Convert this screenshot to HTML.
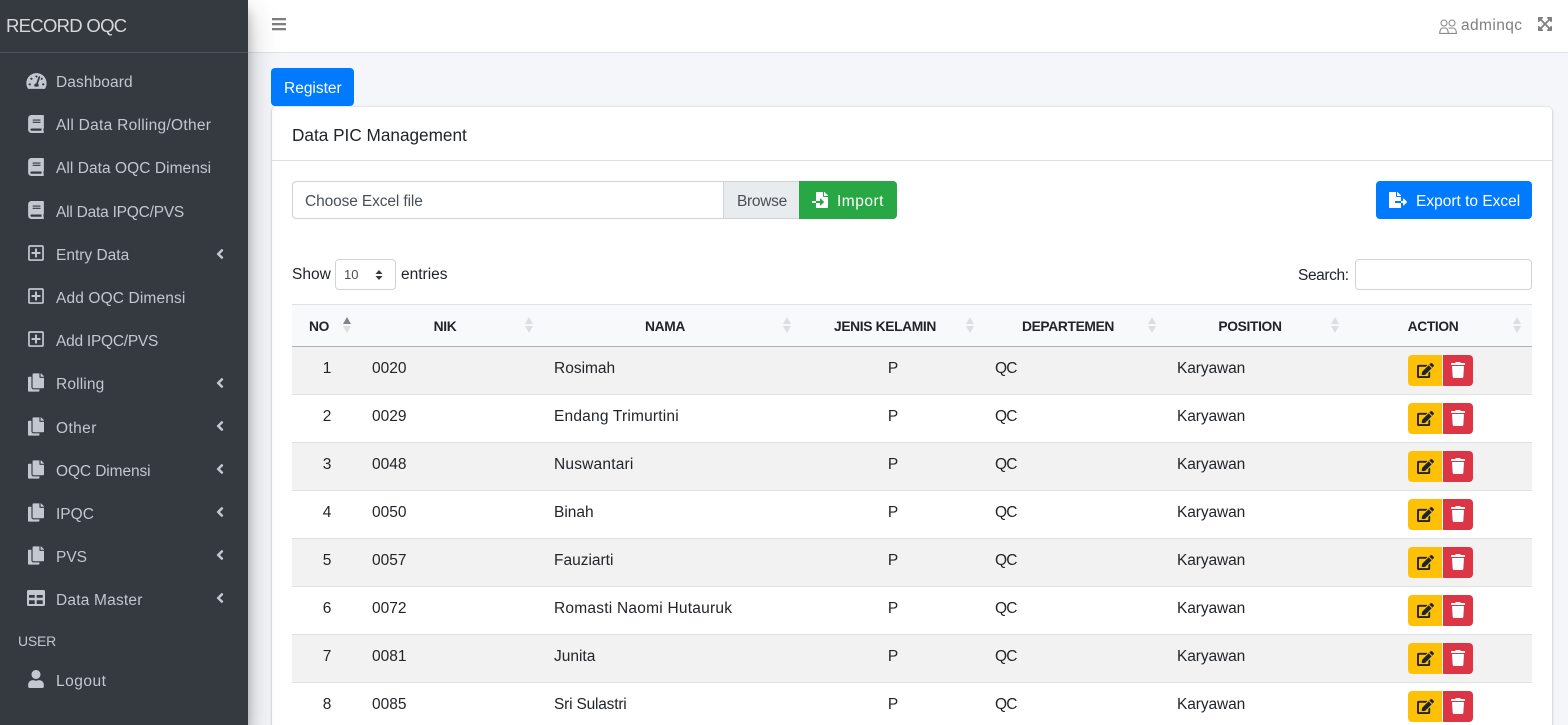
<!DOCTYPE html>
<html><head><meta charset="utf-8"><title>Data PIC Management</title>
<style>
html,body{margin:0;padding:0;width:1568px;height:725px;overflow:hidden;background:#f4f6f9;font-family:"Liberation Sans",sans-serif;font-size:15.5px;color:#212529}
div,svg,span{position:absolute;box-sizing:border-box}
#w{left:0;top:0;width:1568px;height:725px;overflow:hidden;background:#f4f6f9}
.t{line-height:20px;height:20px;white-space:nowrap;margin-top:1px}
.c{transform:translateX(-50%)}
#side{left:0;top:0;width:248px;height:725px;background:#343a40;box-shadow:0 14px 28px rgba(0,0,0,.25),0 10px 10px rgba(0,0,0,.22);z-index:5}
#side .t{left:56px;color:#c2c7d0;margin-top:4px}
#side svg{fill:#c2c7d0}
.ar{left:216px;width:8px;height:16px}
.th{font-weight:bold;font-size:13.8px;letter-spacing:-.35px;color:#212529;top:316px}
.up,.dn{width:0;height:0;border-left:4.5px solid transparent;border-right:4.5px solid transparent}
.up{top:317px;border-bottom:7px solid #dcdfe2}
.dn{top:326px;border-top:7px solid #dcdfe2}
.r{left:292px;width:1240px;height:48px;border-bottom:1px solid #dee2e6}
.e{left:1408px;width:34px;height:31px;background:#ffc107;border-radius:4px 0 0 4px}
.d{left:1443px;width:30px;height:31px;background:#dc3545;border-radius:0 4px 4px 0}
.e svg{left:9px;top:8px;width:17px;height:15px;fill:#1f2326}
.d svg{left:8px;top:7px;width:14px;height:16px;fill:#fff}
</style></head><body>
<svg width="0" height="0" style="position:absolute"><defs>
<symbol id="book" viewBox="0 0 448 512"><path d="M448 360V24c0-13.3-10.7-24-24-24H96C43 0 0 43 0 96v320c0 53 43 96 96 96h328c13.3 0 24-10.7 24-24v-16c0-7.5-3.5-14.3-8.9-18.7-4.2-15.4-4.2-59.3 0-74.7 5.4-4.3 8.9-11.1 8.9-18.6zM128 134c0-3.3 2.7-6 6-6h212c3.3 0 6 2.7 6 6v20c0 3.3-2.7 6-6 6H134c-3.3 0-6-2.7-6-6v-20zm0 64c0-3.3 2.7-6 6-6h212c3.3 0 6 2.7 6 6v20c0 3.3-2.7 6-6 6H134c-3.3 0-6-2.7-6-6v-20zm253.4 250H96c-17.7 0-32-14.3-32-32 0-17.6 14.4-32 32-32h285.4c-1.9 17.1-1.9 46.9 0 64z"/></symbol>
<symbol id="copy" viewBox="0 0 448 512"><path d="M320 448v40c0 13.255-10.745 24-24 24H24c-13.255 0-24-10.745-24-24V120c0-13.255 10.745-24 24-24h72v296c0 30.879 25.121 56 56 56h168zm0-344V0H152c-13.255 0-24 10.745-24 24v368c0 13.255 10.745 24 24 24h272c13.255 0 24-10.745 24-24V128H344c-13.2 0-24-10.8-24-24zm120.971-31.029L375.029 7.029A24 24 0 0 0 358.059 0H352v96h96v-6.059a24 24 0 0 0-7.029-16.97z"/></symbol>
<symbol id="plus" viewBox="0 0 448 512"><path d="M352 240v32c0 6.6-5.4 12-12 12h-88v88c0 6.6-5.4 12-12 12h-32c-6.6 0-12-5.4-12-12v-88h-88c-6.6 0-12-5.4-12-12v-32c0-6.6 5.4-12 12-12h88v-88c0-6.6 5.4-12 12-12h32c6.6 0 12 5.4 12 12v88h88c6.6 0 12 5.4 12 12zm96-160v352c0 26.5-21.5 48-48 48H48c-26.5 0-48-21.5-48-48V80c0-26.5 21.5-48 48-48h352c26.5 0 48 21.5 48 48zm-48 346V86c0-3.3-2.7-6-6-6H54c-3.3 0-6 2.7-6 6v340c0 3.3 2.7 6 6 6h340c3.3 0 6-2.7 6-6z"/></symbol>
<symbol id="ang" viewBox="0 0 256 512"><path d="M31.7 239l136-136c9.4-9.4 24.6-9.4 33.9 0l22.6 22.6c9.4 9.4 9.4 24.6 0 33.9L127.9 256l96.4 96.4c9.4 9.4 9.4 24.6 0 33.9L201.7 409c-9.4 9.4-24.6 9.4-33.9 0l-136-136c-9.5-9.4-9.5-24.6-.1-34z"/></symbol>
<symbol id="edit" viewBox="0 0 576 512"><path d="M402.6 83.2l90.2 90.2c3.8 3.8 3.8 10 0 13.8L274.4 405.6l-92.8 10.3c-12.4 1.4-22.9-9.1-21.5-21.5l10.3-92.8L388.8 83.2c3.8-3.8 10-3.8 13.8 0zm162-22.9l-48.8-48.8c-15.2-15.2-39.9-15.2-55.2 0l-35.4 35.4c-3.8 3.8-3.8 10 0 13.8l90.2 90.2c3.8 3.8 10 3.8 13.8 0l35.4-35.4c15.2-15.3 15.2-40 0-55.2zM384 346.2V448H64V128h229.8c3.2 0 6.2-1.3 8.5-3.5l40-40c7.6-7.6 2.2-20.5-8.5-20.5H48C21.5 64 0 85.5 0 112v352c0 26.5 21.5 48 48 48h352c26.5 0 48-21.5 48-48V306.2c0-10.7-12.9-16-20.5-8.5l-40 40c-2.2 2.3-3.5 5.3-3.5 8.5z"/></symbol>
<symbol id="trash" viewBox="0 0 448 512"><path d="M432 32H312l-9.4-18.7A24 24 0 0 0 281.1 0H166.8a23.72 23.72 0 0 0-21.4 13.3L136 32H16A16 16 0 0 0 0 48v32a16 16 0 0 0 16 16h416a16 16 0 0 0 16-16V48a16 16 0 0 0-16-16zM53.2 467a48 48 0 0 0 47.9 45h245.8a48 48 0 0 0 47.9-45L416 128H32z"/></symbol>
</defs></svg>
<div id="w">
<div id="side">
<div class="t" style="left:6px;top:15px;font-size:18.5px;letter-spacing:-.7px;color:rgba(255,255,255,.8);margin-top:1px">RECORD OQC</div>
<div style="left:0;top:52px;width:248px;height:1px;background:#4b545c"></div>

<svg style="left:26px;top:72px;width:21px;height:18px" viewBox="0 0 576 512"><path d="M288 32C128.94 32 0 160.94 0 320c0 52.8 14.25 102.26 39.06 144.8 5.61 9.62 16.3 15.2 27.44 15.2h443c11.14 0 21.83-5.58 27.44-15.2C561.75 422.26 576 372.8 576 320c0-159.06-128.94-288-288-288zm0 64c14.71 0 26.58 10.13 30.32 23.65-1.11 2.26-2.64 4.23-3.45 6.67l-9.22 27.67c-5.13 3.49-10.97 6.01-17.64 6.01-17.67 0-32-14.33-32-32S270.33 96 288 96zM96 384c-17.67 0-32-14.33-32-32s14.33-32 32-32 32 14.33 32 32-14.33 32-32 32zm48-160c-17.67 0-32-14.33-32-32s14.33-32 32-32 32 14.33 32 32-14.33 32-32 32zm246.77-72.41l-61.33 184C343.13 347.33 352 364.54 352 384c0 11.72-3.38 22.55-8.88 32H232.88c-5.5-9.45-8.88-20.28-8.88-32 0-33.94 26.5-61.43 59.9-63.59l61.34-184.01c4.17-12.56 17.73-19.45 30.36-15.17 12.57 4.19 19.35 17.79 15.17 30.36zm14.66 57.2l15.52-46.55c3.47-1.29 7.13-2.23 11.05-2.23 17.67 0 32 14.33 32 32s-14.33 32-32 32c-11.38-.01-20.89-6.28-26.57-15.22zM480 384c-17.67 0-32-14.33-32-32s14.33-32 32-32 32 14.33 32 32-14.33 32-32 32z"/></svg>
<div class="t" style="top:69px;letter-spacing:.1px">Dashboard</div>

<svg style="left:28px;top:115px;width:16px;height:18px"><use href="#book"/></svg>
<div class="t" style="top:112px;letter-spacing:.28px">All Data Rolling/Other</div>
<svg style="left:28px;top:158px;width:16px;height:18px"><use href="#book"/></svg>
<div class="t" style="top:155px;letter-spacing:.05px">All Data OQC Dimensi</div>
<svg style="left:28px;top:201px;width:16px;height:18px"><use href="#book"/></svg>
<div class="t" style="top:199px;letter-spacing:-.22px">All Data IPQC/PVS</div>

<svg style="left:28px;top:244px;width:16px;height:18px"><use href="#plus"/></svg>
<div class="t" style="top:242px">Entry Data</div>
<svg class="ar" style="top:246px"><use href="#ang"/></svg>
<svg style="left:28px;top:287px;width:16px;height:18px"><use href="#plus"/></svg>
<div class="t" style="top:285px;letter-spacing:.13px">Add OQC Dimensi</div>
<svg style="left:28px;top:330px;width:16px;height:18px"><use href="#plus"/></svg>
<div class="t" style="top:328px;letter-spacing:-.25px">Add IPQC/PVS</div>

<svg style="left:28px;top:373px;width:16px;height:19px"><use href="#copy"/></svg>
<div class="t" style="top:371px;letter-spacing:.15px">Rolling</div>
<svg class="ar" style="top:375px"><use href="#ang"/></svg>
<svg style="left:28px;top:417px;width:16px;height:19px"><use href="#copy"/></svg>
<div class="t" style="top:415px;letter-spacing:.4px">Other</div>
<svg class="ar" style="top:418px"><use href="#ang"/></svg>
<svg style="left:28px;top:460px;width:16px;height:19px"><use href="#copy"/></svg>
<div class="t" style="top:458px;letter-spacing:-.1px">OQC Dimensi</div>
<svg class="ar" style="top:461px"><use href="#ang"/></svg>
<svg style="left:28px;top:503px;width:16px;height:19px"><use href="#copy"/></svg>
<div class="t" style="top:501px">IPQC</div>
<svg class="ar" style="top:504px"><use href="#ang"/></svg>
<svg style="left:28px;top:546px;width:16px;height:19px"><use href="#copy"/></svg>
<div class="t" style="top:544px">PVS</div>
<svg class="ar" style="top:547px"><use href="#ang"/></svg>

<svg style="left:27px;top:590px;width:18px;height:16px" viewBox="0 0 18 16"><path fill-rule="evenodd" d="M1.500 0h15A1.500 1.500 0 0 1 18 1.500v13a1.500 1.500 0 0 1-1.500 1.500h-15A1.500 1.500 0 0 1 0 14.500v-13A1.500 1.500 0 0 1 1.500 0zM2 5v2.700h5.700V5zm7.700 0v2.700h6V5zM2 10.300V14h5.700v-3.700zm7.700 0V14h6v-3.700z"/></svg>
<div class="t" style="top:587px;letter-spacing:.2px">Data Master</div>
<svg class="ar" style="top:590px"><use href="#ang"/></svg>

<div class="t" style="left:18px;top:631px;font-size:14px;margin-top:0;letter-spacing:-.2px">USER</div>
<svg style="left:28px;top:670px;width:16px;height:18px" viewBox="0 0 448 512"><path d="M224 256c70.700 0 128-57.300 128-128S294.700 0 224 0 96 57.300 96 128s57.300 128 128 128zm89.600 32h-16.700c-22.200 10.200-46.900 16-72.900 16s-50.600-5.800-72.900-16h-16.700C60.200 288 0 348.200 0 422.400V464c0 26.500 21.500 48 48 48h352c26.500 0 48-21.500 48-48v-41.600c0-74.200-60.200-134.400-134.400-134.400z"/></svg>
<div class="t" style="top:668px;letter-spacing:.5px">Logout</div>
</div>

<div style="left:248px;top:0;width:1320px;height:53px;background:#fff;border-bottom:1px solid #dee2e6"></div>
<svg style="left:272px;top:18px;width:14px;height:13px" viewBox="0 0 14 13" fill="#7f7f7f"><rect width="14" height="2.300" y="0"/><rect width="14" height="2.300" y="5"/><rect width="14" height="2.300" y="10"/></svg>
<svg style="left:1439px;top:19px;width:18px;height:15px" viewBox="0 0 18 15" fill="none" stroke="#8a8a8a" stroke-width="1.100"><circle cx="5" cy="4" r="3"/><circle cx="13" cy="4" r="3"/><path d="M.7 14.400c0-3.500 1.500-5.400 3-5.400h2.600c1.500 0 3 1.900 3 5.400zM9.500 9.200c.6-.2 1-.2 1.800-.2h2.700c2 0 3.400 2 3.400 5.400H9.300"/></svg>
<div class="t" style="left:1461px;top:15px;color:#7f7f7f;letter-spacing:.4px">adminqc</div>
<svg style="left:1538px;top:16px;width:14px;height:16px;fill:#7f7f7f" viewBox="0 0 448 512"><path d="M448 344v112a23.940 23.940 0 0 1-24 24H312c-21.390 0-32.090-25.900-17-41l36.200-36.200L224 295.600 116.770 402.900 153 439c15.090 15.100 4.390 41-17 41H24a23.940 23.940 0 0 1-24-24V344c0-21.400 25.890-32.100 41-17l36.190 36.200L184.460 256 77.180 148.700 41 185c-15.100 15.100-41 4.400-41-17V56a23.940 23.940 0 0 1 24-24h112c21.390 0 32.090 25.900 17 41l-36.200 36.200L224 216.400l107.230-107.300L295 73c-15.090-15.100-4.390-41 17-41h112a23.940 23.940 0 0 1 24 24v112c0 21.400-25.890 32.100-41 17l-36.190-36.200L263.540 256l107.280 107.300L407 327.100c15.100-15.200 41-4.500 41 16.900z"/></svg>

<div style="left:271px;top:68px;width:83px;height:38px;background:#007bff;border-radius:4px"></div>
<div class="t" style="left:284px;top:78px;color:#fff">Register</div>

<div style="left:272px;top:107px;width:1280px;height:640px;background:#fff;border-radius:4px 4px 0 0;box-shadow:0 0 1px rgba(0,0,0,.2),0 1px 3px rgba(0,0,0,.2)"></div>
<div style="left:272px;top:160px;width:1280px;height:1px;background:#dfe2e5"></div>
<div class="t" style="left:292px;top:124px;font-size:17.200px">Data PIC Management</div>

<div style="left:292px;top:181px;width:432px;height:38px;border:1px solid #ced4da;border-right:0;border-radius:4px 0 0 4px;background:#fff"></div>
<div class="t" style="left:305px;top:191px;color:#495057;letter-spacing:-.12px">Choose Excel file</div>
<div style="left:723px;top:181px;width:76px;height:38px;border:1px solid #ced4da;border-right:0;background:#e9ecef"></div>
<div class="t" style="left:737px;top:191px;color:#495057;letter-spacing:-.3px">Browse</div>
<div style="left:799px;top:181px;width:98px;height:38px;background:#28a745;border-radius:0 4px 4px 0"></div>
<svg style="left:812px;top:192px;width:16px;height:16px;fill:#fff" viewBox="0 0 512 512"><path d="M16 288c-8.800 0-16 7.200-16 16v32c0 8.800 7.200 16 16 16h112v-64zm489-183L407.100 7c-4.500-4.500-10.600-7-17-7H384v128h128v-6.100c0-6.300-2.500-12.400-7-16.900zm-153 31V0H152c-13.300 0-24 10.700-24 24v264h128v-65.200c0-14.300 17.300-21.400 27.400-11.300L379 308c6.600 6.700 6.600 17.400 0 24l-95.700 96.400c-10.100 10.100-27.400 3-27.400-11.300V352H128v136c0 13.300 10.700 24 24 24h336c13.300 0 24-10.700 24-24V160H376c-13.200 0-24-10.800-24-24z"/></svg>
<div class="t" style="left:837px;top:191px;color:#fff;letter-spacing:.5px">Import</div>

<div style="left:1376px;top:181px;width:156px;height:38px;background:#007bff;border-radius:4px"></div>
<svg style="left:1389px;top:192px;width:18px;height:16px;fill:#fff" viewBox="0 0 576 512"><path d="M384 121.900c0-6.300-2.500-12.400-7-16.900L279.100 7c-4.500-4.500-10.600-7-17-7H256v128h128zM571 308l-95.700-96.400c-10.100-10.100-27.400-3-27.400 11.300V288h-64v64h64v65.200c0 14.300 17.300 21.400 27.400 11.300L571 332c6.600-6.600 6.600-17.400 0-24zm-379 28v-32c0-8.800 7.200-16 16-16h176V160H248c-13.200 0-24-10.800-24-24V0H24C10.700 0 0 10.700 0 24v464c0 13.300 10.700 24 24 24h336c13.300 0 24-10.700 24-24V352H208c-8.800 0-16-7.200-16-16z"/></svg>
<div class="t" style="left:1416px;top:191px;color:#fff">Export to Excel</div>

<div class="t" style="left:292px;top:264px">Show</div>
<div style="left:335px;top:259px;width:61px;height:31px;border:1px solid #ced4da;border-radius:4px;background:#fff"></div>
<div class="t" style="left:344px;top:264px;font-size:13px;color:#495057">10</div>
<svg style="left:375px;top:270px;width:8px;height:10px" viewBox="0 0 8 10" fill="#343a40"><path d="M4 0l3.500 4H.5zM4 10L.5 6h7z"/></svg>
<div class="t" style="left:401px;top:264px">entries</div>
<div class="t" style="left:1298px;top:265px;letter-spacing:-.4px">Search:</div>
<div style="left:1355px;top:259px;width:177px;height:31px;border:1px solid #ced4da;border-radius:4px;background:#fff"></div>

<div style="left:292px;top:304px;width:1240px;height:44px;background:#f8f9fa;border-top:1px solid #dee2e6;border-bottom:2px solid #aeb0b3"></div>
<div class="t th c" style="left:319px">NO</div>
<div class="t th c" style="left:445px">NIK</div>
<div class="t th c" style="left:665px">NAMA</div>
<div class="t th c" style="left:885px">JENIS KELAMIN</div>
<div class="t th c" style="left:1068px">DEPARTEMEN</div>
<div class="t th c" style="left:1250px">POSITION</div>
<div class="t th c" style="left:1433px">ACTION</div>
<div class="up" style="left:342.500px;border-bottom-color:#7f858c"></div><div class="dn" style="left:342.500px"></div>
<div class="up" style="left:524.500px"></div><div class="dn" style="left:524.500px"></div>
<div class="up" style="left:782.500px"></div><div class="dn" style="left:782.500px"></div>
<div class="up" style="left:965.500px"></div><div class="dn" style="left:965.500px"></div>
<div class="up" style="left:1147.500px"></div><div class="dn" style="left:1147.500px"></div>
<div class="up" style="left:1330.500px"></div><div class="dn" style="left:1330.500px"></div>
<div class="up" style="left:1512.500px"></div><div class="dn" style="left:1512.500px"></div>

<div class="r" style="top:347px;background:#f2f2f2"></div>
<div class="r" style="top:395px;background:#fff"></div>
<div class="r" style="top:443px;background:#f2f2f2"></div>
<div class="r" style="top:491px;background:#fff"></div>
<div class="r" style="top:539px;background:#f2f2f2"></div>
<div class="r" style="top:587px;background:#fff"></div>
<div class="r" style="top:635px;background:#f2f2f2"></div>
<div class="r" style="top:683px;background:#fff"></div>

<div class="t c" style="left:327px;top:358px">1</div><div class="t" style="left:372px;top:358px">0020</div><div class="t" style="left:554px;top:358px">Rosimah</div><div class="t c" style="left:893px;top:358px">P</div><div class="t" style="left:995px;top:358px;letter-spacing:-.8px">QC</div><div class="t" style="left:1177px;top:358px;letter-spacing:-.1px">Karyawan</div>
<div class="e" style="top:355px"><svg><use href="#edit"/></svg></div><div class="d" style="top:355px"><svg><use href="#trash"/></svg></div>

<div class="t c" style="left:327px;top:406px">2</div><div class="t" style="left:372px;top:406px">0029</div><div class="t" style="left:554px;top:406px;letter-spacing:.2px">Endang Trimurtini</div><div class="t c" style="left:893px;top:406px">P</div><div class="t" style="left:995px;top:406px;letter-spacing:-.8px">QC</div><div class="t" style="left:1177px;top:406px;letter-spacing:-.1px">Karyawan</div>
<div class="e" style="top:403px"><svg><use href="#edit"/></svg></div><div class="d" style="top:403px"><svg><use href="#trash"/></svg></div>

<div class="t c" style="left:327px;top:454px">3</div><div class="t" style="left:372px;top:454px">0048</div><div class="t" style="left:554px;top:454px;letter-spacing:.2px">Nuswantari</div><div class="t c" style="left:893px;top:454px">P</div><div class="t" style="left:995px;top:454px;letter-spacing:-.8px">QC</div><div class="t" style="left:1177px;top:454px;letter-spacing:-.1px">Karyawan</div>
<div class="e" style="top:451px"><svg><use href="#edit"/></svg></div><div class="d" style="top:451px"><svg><use href="#trash"/></svg></div>

<div class="t c" style="left:327px;top:502px">4</div><div class="t" style="left:372px;top:502px">0050</div><div class="t" style="left:554px;top:502px">Binah</div><div class="t c" style="left:893px;top:502px">P</div><div class="t" style="left:995px;top:502px;letter-spacing:-.8px">QC</div><div class="t" style="left:1177px;top:502px;letter-spacing:-.1px">Karyawan</div>
<div class="e" style="top:499px"><svg><use href="#edit"/></svg></div><div class="d" style="top:499px"><svg><use href="#trash"/></svg></div>

<div class="t c" style="left:327px;top:550px">5</div><div class="t" style="left:372px;top:550px">0057</div><div class="t" style="left:554px;top:550px">Fauziarti</div><div class="t c" style="left:893px;top:550px">P</div><div class="t" style="left:995px;top:550px;letter-spacing:-.8px">QC</div><div class="t" style="left:1177px;top:550px;letter-spacing:-.1px">Karyawan</div>
<div class="e" style="top:547px"><svg><use href="#edit"/></svg></div><div class="d" style="top:547px"><svg><use href="#trash"/></svg></div>

<div class="t c" style="left:327px;top:598px">6</div><div class="t" style="left:372px;top:598px">0072</div><div class="t" style="left:554px;top:598px;letter-spacing:.23px">Romasti Naomi Hutauruk</div><div class="t c" style="left:893px;top:598px">P</div><div class="t" style="left:995px;top:598px;letter-spacing:-.8px">QC</div><div class="t" style="left:1177px;top:598px;letter-spacing:-.1px">Karyawan</div>
<div class="e" style="top:595px"><svg><use href="#edit"/></svg></div><div class="d" style="top:595px"><svg><use href="#trash"/></svg></div>

<div class="t c" style="left:327px;top:646px">7</div><div class="t" style="left:372px;top:646px">0081</div><div class="t" style="left:554px;top:646px">Junita</div><div class="t c" style="left:893px;top:646px">P</div><div class="t" style="left:995px;top:646px;letter-spacing:-.8px">QC</div><div class="t" style="left:1177px;top:646px;letter-spacing:-.1px">Karyawan</div>
<div class="e" style="top:643px"><svg><use href="#edit"/></svg></div><div class="d" style="top:643px"><svg><use href="#trash"/></svg></div>

<div class="t c" style="left:327px;top:694px">8</div><div class="t" style="left:372px;top:694px">0085</div><div class="t" style="left:554px;top:694px;letter-spacing:-.2px">Sri Sulastri</div><div class="t c" style="left:893px;top:694px">P</div><div class="t" style="left:995px;top:694px;letter-spacing:-.8px">QC</div><div class="t" style="left:1177px;top:694px;letter-spacing:-.1px">Karyawan</div>
<div class="e" style="top:691px"><svg><use href="#edit"/></svg></div><div class="d" style="top:691px"><svg><use href="#trash"/></svg></div>
</div>
</body></html>
